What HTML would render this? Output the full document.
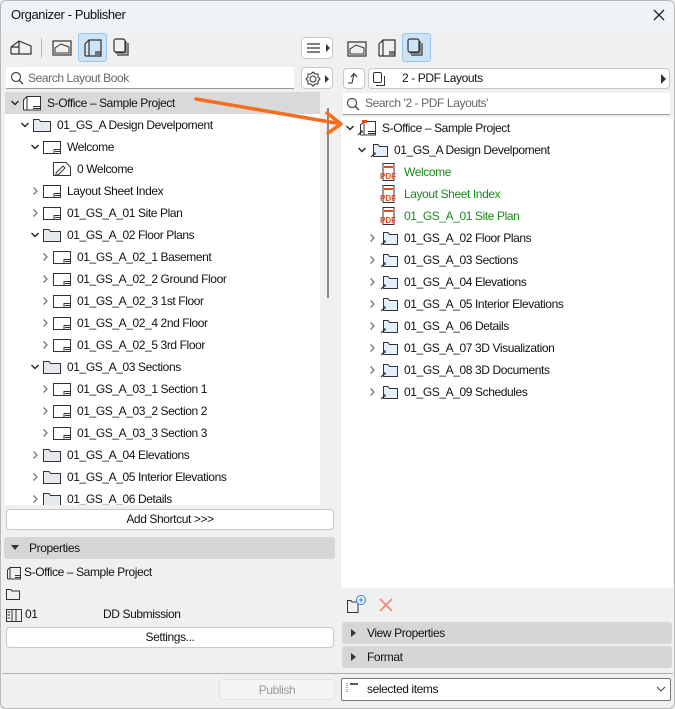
<!DOCTYPE html>
<html><head><meta charset="utf-8">
<style>
*{box-sizing:border-box;margin:0;padding:0}
body{width:675px;height:709px;background:#f0f0f0;font-family:"Segoe UI","Liberation Sans",sans-serif;font-size:12px;color:#111;position:relative;overflow:hidden;letter-spacing:-0.4px}
.a{position:absolute}
.win{left:0;top:0;width:675px;height:709px;border:1px solid #b8b8b8;border-radius:6px;background:#f0f0f0}
.title{left:1px;top:1px;width:673px;height:29px;background:#eef3f8;border-radius:6px 6px 0 0}
.r{position:absolute;height:22px;line-height:22px;display:flex;align-items:center;white-space:nowrap;font-size:12px}
.c{width:14px;height:22px;display:flex;align-items:center;justify-content:center}
.i{width:20px;height:22px;display:flex;align-items:center;margin-right:5px}
.btn{position:absolute;background:#fff;border:1px solid #c8c8c8;border-radius:4px;text-align:center;font-size:12px}
.hdr{position:absolute;background:#d6d6d6;border-radius:3px;font-size:12px;line-height:20px}
.g{color:#1a8a1a}
</style></head><body>
<div class="a win"></div>
<div class="a title"></div>
<div class="a" style="left:11px;top:7px;font-size:13px">Organizer - Publisher</div>
<svg class="a" style="left:652px;top:8px" width="14" height="14"><path d="M2 2L12 12M12 2L2 12" stroke="#222" stroke-width="1.3"/></svg>

<svg class="a" style="left:9px;top:38px" width="24" height="20"><path d="M2 16V9L10 3L22 8V16H2M10 3V16M2 9L10 9" fill="none" stroke="#333" stroke-width="1.2"/></svg>
<div class="a" style="left:41px;top:38px;width:1px;height:20px;background:#bbb"></div>
<svg class="a" style="left:51px;top:38px" width="22" height="20"><rect x="2" y="3" width="18" height="14" fill="none" stroke="#333" stroke-width="1.2"/><path d="M4 15V10L10 6L18 9V15Z" fill="none" stroke="#333"/></svg>
<div class="a" style="left:78px;top:33px;width:29px;height:29px;background:#cde4f7;border:1px solid #9cc6ea;border-radius:3px"></div>
<svg class="a" style="left:82px;top:37px" width="22" height="22"><path d="M3 19V7L7 3H19V19H3M7 3V19M13 15H19M13 17H19" fill="none" stroke="#333" stroke-width="1.2"/></svg>
<svg class="a" style="left:112px;top:37px" width="20" height="22"><rect x="2" y="2" width="11" height="13" rx="2" fill="none" stroke="#333" stroke-width="1.2"/><path d="M5 18H16V6" fill="none" stroke="#333" stroke-width="1.2"/><path d="M4 15V16H14V4" fill="none" stroke="#333"/></svg>
<div class="btn" style="left:301px;top:37px;width:32px;height:22px"></div>
<svg class="a" style="left:306px;top:42px" width="26" height="12"><path d="M1 2H14M1 6H14M1 10H14" stroke="#333" stroke-width="1.2"/><path d="M20 2L24 6L20 10Z" fill="#333"/></svg>

<div class="a" style="left:6px;top:67px;width:288px;height:22px;background:#fff;border-bottom:1px solid #999"></div>
<svg class="a" style="left:10px;top:71px" width="14" height="14"><circle cx="6" cy="6" r="4.5" fill="none" stroke="#444" stroke-width="1.2"/><path d="M9.5 9.5L13 13" stroke="#444" stroke-width="1.3"/></svg>
<div class="a" style="left:28px;top:71px;color:#666">Search Layout Book</div>
<div class="btn" style="left:301px;top:67px;width:32px;height:22px"></div>
<svg class="a" style="left:304px;top:70px" width="28" height="18"><circle cx="9" cy="9" r="3" fill="none" stroke="#333"/><path d="M9 2L11 4L14 4L14 7L16 9L14 11L14 14L11 14L9 16L7 14L4 14L4 11L2 9L4 7L4 4L7 4Z" fill="none" stroke="#333"/><path d="M21 5L25 9L21 13Z" fill="#333"/></svg>

<div class="a" style="left:5px;top:92px;width:315px;height:413px;background:#fff"></div>
<div class="a" style="left:5px;top:92px;width:315px;height:22px;background:#d9d9d9"></div>
<div class="a" style="left:320px;top:92px;width:16px;height:413px;background:#f0f0f0"></div>
<div class="a" style="left:327px;top:108px;width:2px;height:190px;background:#888"></div>

<svg width="0" height="0" style="position:absolute"><defs>
<symbol id="cd" viewBox="0 0 10 10"><path d="M1.5 3L5 6.5L8.5 3" fill="none" stroke="#222" stroke-width="1.4"/></symbol>
<symbol id="cr" viewBox="0 0 10 10"><path d="M3.5 1.5L7 5L3.5 8.5" fill="none" stroke="#777" stroke-width="1.3"/></symbol>
<symbol id="fo" viewBox="0 0 20 16"><path d="M1.5 2.5H7L8.5 4.5H18.5V14.5H1.5Z" fill="#e6e9ef" stroke="#333"/></symbol>
<symbol id="sh" viewBox="0 0 20 16"><rect x="1.5" y="2.5" width="17" height="12" fill="#fff" stroke="#333"/><path d="M12 14.5V10.5H18.5M13 12.5H18" fill="none" stroke="#333"/></symbol>
<symbol id="bk" viewBox="0 0 20 16"><path d="M1.5 15V5L5 1.5H18.5V15H1.5M5 1.5V15M11 11.5H18M11 13.5H18" fill="#fff" stroke="#333"/></symbol>
<symbol id="dr" viewBox="0 0 20 16"><path d="M1.5 1.5H14L18.5 6V14.5H1.5Z" fill="#fff" stroke="#333"/><path d="M4 12L11 5L13 7L6 14H4Z" fill="none" stroke="#333"/></symbol>
<symbol id="pd" viewBox="0 0 20 20"><path d="M4 1.5H15V18.5H4Z" fill="#fff" stroke="#333"/><rect x="5" y="4" width="9" height="2" fill="#e84a1c"/><text x="1" y="17" font-size="8" font-family="Liberation Sans" fill="#e84a1c" font-weight="bold" letter-spacing="0">PDF</text></symbol>
<symbol id="rf" viewBox="0 0 20 16"><path d="M4.5 2.5H9L10.5 4.5H18.5V14.5H4.5Z" fill="#e3f0fb" stroke="#333"/><path d="M2 15L5 12M4 11H6V13" stroke="#333" fill="none" stroke-width="1.2"/></symbol>
<symbol id="rb" viewBox="0 0 20 16"><path d="M3.5 15V5L7 1.5H18.5V15H3.5M7 1.5V15" fill="#fff" stroke="#333"/><path d="M11 11.5H18M11 13.5H18" stroke="#333"/><rect x="5" y="0" width="5" height="3" fill="#e84a1c"/><path d="M1 15L4 12M3 11H5V13" stroke="#333" fill="none" stroke-width="1.2"/></symbol>
</defs></svg>

<div class="r" style="top:92px;left:8px"><span class="c"><svg width="10" height="10"><use href="#cd"/></svg></span><span class="i"><svg width="20" height="16"><use href="#bk"/></svg></span>S-Office – Sample Project</div>
<div class="r" style="top:114px;left:18px"><span class="c"><svg width="10" height="10"><use href="#cd"/></svg></span><span class="i"><svg width="20" height="16"><use href="#fo"/></svg></span>01_GS_A Design Develpoment</div>
<div class="r" style="top:136px;left:28px"><span class="c"><svg width="10" height="10"><use href="#cd"/></svg></span><span class="i"><svg width="20" height="16"><use href="#sh"/></svg></span>Welcome</div>
<div class="r" style="top:158px;left:38px"><span class="c"></span><span class="i"><svg width="20" height="16"><use href="#dr"/></svg></span>0 Welcome</div>
<div class="r" style="top:180px;left:28px"><span class="c"><svg width="10" height="10"><use href="#cr"/></svg></span><span class="i"><svg width="20" height="16"><use href="#sh"/></svg></span>Layout Sheet Index</div>
<div class="r" style="top:202px;left:28px"><span class="c"><svg width="10" height="10"><use href="#cr"/></svg></span><span class="i"><svg width="20" height="16"><use href="#sh"/></svg></span>01_GS_A_01 Site Plan</div>
<div class="r" style="top:224px;left:28px"><span class="c"><svg width="10" height="10"><use href="#cd"/></svg></span><span class="i"><svg width="20" height="16"><use href="#fo"/></svg></span>01_GS_A_02 Floor Plans</div>
<div class="r" style="top:246px;left:38px"><span class="c"><svg width="10" height="10"><use href="#cr"/></svg></span><span class="i"><svg width="20" height="16"><use href="#sh"/></svg></span>01_GS_A_02_1 Basement</div>
<div class="r" style="top:268px;left:38px"><span class="c"><svg width="10" height="10"><use href="#cr"/></svg></span><span class="i"><svg width="20" height="16"><use href="#sh"/></svg></span>01_GS_A_02_2 Ground Floor</div>
<div class="r" style="top:290px;left:38px"><span class="c"><svg width="10" height="10"><use href="#cr"/></svg></span><span class="i"><svg width="20" height="16"><use href="#sh"/></svg></span>01_GS_A_02_3 1st Floor</div>
<div class="r" style="top:312px;left:38px"><span class="c"><svg width="10" height="10"><use href="#cr"/></svg></span><span class="i"><svg width="20" height="16"><use href="#sh"/></svg></span>01_GS_A_02_4 2nd Floor</div>
<div class="r" style="top:334px;left:38px"><span class="c"><svg width="10" height="10"><use href="#cr"/></svg></span><span class="i"><svg width="20" height="16"><use href="#sh"/></svg></span>01_GS_A_02_5 3rd Floor</div>
<div class="r" style="top:356px;left:28px"><span class="c"><svg width="10" height="10"><use href="#cd"/></svg></span><span class="i"><svg width="20" height="16"><use href="#fo"/></svg></span>01_GS_A_03 Sections</div>
<div class="r" style="top:378px;left:38px"><span class="c"><svg width="10" height="10"><use href="#cr"/></svg></span><span class="i"><svg width="20" height="16"><use href="#sh"/></svg></span>01_GS_A_03_1 Section 1</div>
<div class="r" style="top:400px;left:38px"><span class="c"><svg width="10" height="10"><use href="#cr"/></svg></span><span class="i"><svg width="20" height="16"><use href="#sh"/></svg></span>01_GS_A_03_2 Section 2</div>
<div class="r" style="top:422px;left:38px"><span class="c"><svg width="10" height="10"><use href="#cr"/></svg></span><span class="i"><svg width="20" height="16"><use href="#sh"/></svg></span>01_GS_A_03_3 Section 3</div>
<div class="r" style="top:444px;left:28px"><span class="c"><svg width="10" height="10"><use href="#cr"/></svg></span><span class="i"><svg width="20" height="16"><use href="#fo"/></svg></span>01_GS_A_04 Elevations</div>
<div class="r" style="top:466px;left:28px"><span class="c"><svg width="10" height="10"><use href="#cr"/></svg></span><span class="i"><svg width="20" height="16"><use href="#fo"/></svg></span>01_GS_A_05 Interior Elevations</div>
<div class="a" style="left:5px;top:488px;width:315px;height:17px;overflow:hidden"><div class="r" style="top:0;left:23px"><span class="c"><svg width="10" height="10"><use href="#cr"/></svg></span><span class="i"><svg width="20" height="16"><use href="#fo"/></svg></span>01_GS_A_06 Details</div></div>

<div class="btn" style="left:6px;top:509px;width:328px;height:21px;line-height:19px">Add Shortcut &gt;&gt;&gt;</div>
<div class="hdr" style="left:4px;top:537px;width:331px;height:22px;line-height:22px"><svg class="a" style="left:7px;top:8px" width="8" height="6"><path d="M0 0H8L4 5Z" fill="#333"/></svg><span style="position:absolute;left:25px">Properties</span></div>
<svg class="a" style="left:6px;top:566px" width="16" height="14"><path d="M1.5 13V4L4 1.5H14.5V13H1.5M4 1.5V13M9 9.5H14M9 11.5H14" fill="none" stroke="#333"/></svg>
<div class="a" style="left:24px;top:565px">S-Office – Sample Project</div>
<svg class="a" style="left:6px;top:588px" width="14" height="12"><path d="M0.5 1.5H5L6 3H13.5V11.5H0.5Z" fill="none" stroke="#333"/></svg>
<svg class="a" style="left:6px;top:609px" width="16" height="13"><path d="M0.5 0.5H15.5V12.5H0.5ZM6 0.5V12.5M10 0.5V12.5M1.5 3H4M1.5 6H4M1.5 9H4" fill="none" stroke="#333"/></svg>
<div class="a" style="left:25px;top:607px">01</div>
<div class="a" style="left:103px;top:607px">DD Submission</div>
<div class="btn" style="left:6px;top:627px;width:328px;height:21px;line-height:19px">Settings...</div>

<svg class="a" style="left:346px;top:39px" width="22" height="20"><rect x="2" y="3" width="18" height="14" fill="none" stroke="#333" stroke-width="1.2"/><path d="M4 15V10L10 6L18 9V15Z" fill="none" stroke="#333"/></svg>
<svg class="a" style="left:376px;top:37px" width="22" height="22"><path d="M3 19V7L7 3H19V19H3M7 3V19M13 15H19M13 17H19" fill="none" stroke="#333" stroke-width="1.2"/></svg>
<div class="a" style="left:402px;top:33px;width:29px;height:29px;background:#cde4f7;border:1px solid #9cc6ea;border-radius:3px"></div>
<svg class="a" style="left:406px;top:37px" width="20" height="22"><rect x="2" y="2" width="11" height="13" rx="2" fill="none" stroke="#333" stroke-width="1.2"/><path d="M5 18H16V6" fill="none" stroke="#333" stroke-width="1.2"/><path d="M4 15V16H14V4" fill="none" stroke="#333"/></svg>

<div class="btn" style="left:343px;top:68px;width:22px;height:21px"></div>
<svg class="a" style="left:347px;top:71px" width="14" height="14"><path d="M1 12H5L7 3M4 6L7 2.5L10 6" fill="none" stroke="#333" stroke-width="1.1"/></svg>
<div class="btn" style="left:368px;top:68px;width:302px;height:21px"></div>
<svg class="a" style="left:372px;top:71px" width="16" height="16"><rect x="1.5" y="1.5" width="8" height="10" rx="1.5" fill="none" stroke="#333"/><path d="M4 14.5H12.5V5" fill="none" stroke="#333"/></svg>
<div class="a" style="left:402px;top:71px">2 - PDF Layouts</div>
<svg class="a" style="left:661px;top:74px" width="6" height="10"><path d="M0 0L5 5L0 10Z" fill="#333"/></svg>
<div class="a" style="left:343px;top:93px;width:327px;height:22px;background:#fff;border-bottom:1px solid #999"></div>
<svg class="a" style="left:346px;top:97px" width="14" height="14"><circle cx="6" cy="6" r="4.5" fill="none" stroke="#444" stroke-width="1.2"/><path d="M9.5 9.5L13 13" stroke="#444" stroke-width="1.3"/></svg>
<div class="a" style="left:365px;top:96px;color:#666">Search '2 - PDF Layouts'</div>

<div class="a" style="left:341px;top:117px;width:332px;height:471px;background:#fff"></div>
<div class="r" style="top:117px;left:343px"><span class="c"><svg width="10" height="10"><use href="#cd"/></svg></span><span class="i"><svg width="20" height="16"><use href="#rb"/></svg></span>S-Office – Sample Project</div>
<div class="r" style="top:139px;left:355px"><span class="c"><svg width="10" height="10"><use href="#cd"/></svg></span><span class="i"><svg width="20" height="16"><use href="#rf"/></svg></span>01_GS_A Design Develpoment</div>
<div class="r g" style="top:161px;left:365px"><span class="c"></span><span class="i"><svg width="20" height="20"><use href="#pd"/></svg></span>Welcome</div>
<div class="r g" style="top:183px;left:365px"><span class="c"></span><span class="i"><svg width="20" height="20"><use href="#pd"/></svg></span>Layout Sheet Index</div>
<div class="r g" style="top:205px;left:365px"><span class="c"></span><span class="i"><svg width="20" height="20"><use href="#pd"/></svg></span>01_GS_A_01 Site Plan</div>
<div class="r" style="top:227px;left:365px"><span class="c"><svg width="10" height="10"><use href="#cr"/></svg></span><span class="i"><svg width="20" height="16"><use href="#rf"/></svg></span>01_GS_A_02 Floor Plans</div>
<div class="r" style="top:249px;left:365px"><span class="c"><svg width="10" height="10"><use href="#cr"/></svg></span><span class="i"><svg width="20" height="16"><use href="#rf"/></svg></span>01_GS_A_03 Sections</div>
<div class="r" style="top:271px;left:365px"><span class="c"><svg width="10" height="10"><use href="#cr"/></svg></span><span class="i"><svg width="20" height="16"><use href="#rf"/></svg></span>01_GS_A_04 Elevations</div>
<div class="r" style="top:293px;left:365px"><span class="c"><svg width="10" height="10"><use href="#cr"/></svg></span><span class="i"><svg width="20" height="16"><use href="#rf"/></svg></span>01_GS_A_05 Interior Elevations</div>
<div class="r" style="top:315px;left:365px"><span class="c"><svg width="10" height="10"><use href="#cr"/></svg></span><span class="i"><svg width="20" height="16"><use href="#rf"/></svg></span>01_GS_A_06 Details</div>
<div class="r" style="top:337px;left:365px"><span class="c"><svg width="10" height="10"><use href="#cr"/></svg></span><span class="i"><svg width="20" height="16"><use href="#rf"/></svg></span>01_GS_A_07 3D Visualization</div>
<div class="r" style="top:359px;left:365px"><span class="c"><svg width="10" height="10"><use href="#cr"/></svg></span><span class="i"><svg width="20" height="16"><use href="#rf"/></svg></span>01_GS_A_08 3D Documents</div>
<div class="r" style="top:381px;left:365px"><span class="c"><svg width="10" height="10"><use href="#cr"/></svg></span><span class="i"><svg width="20" height="16"><use href="#rf"/></svg></span>01_GS_A_09 Schedules</div>

<svg class="a" style="left:346px;top:594px" width="24" height="20"><path d="M1.5 6.5H5L6 8H12V18.5H1.5Z" fill="none" stroke="#333"/><circle cx="15" cy="6" r="4.5" fill="#fff" stroke="#2b7de0"/><path d="M15 3.5V8.5M12.5 6H17.5" stroke="#2b7de0"/></svg>
<svg class="a" style="left:378px;top:597px" width="16" height="16"><path d="M2 2L14 14M14 2L2 14" stroke="#f08a7a" stroke-width="1.8"/></svg>
<div class="hdr" style="left:342px;top:622px;width:330px;height:22px;line-height:22px"><svg class="a" style="left:9px;top:7px" width="6" height="8"><path d="M0 0L5 4L0 8Z" fill="#333"/></svg><span style="position:absolute;left:25px">View Properties</span></div>
<div class="hdr" style="left:342px;top:646px;width:330px;height:22px;line-height:22px"><svg class="a" style="left:9px;top:7px" width="6" height="8"><path d="M0 0L5 4L0 8Z" fill="#333"/></svg><span style="position:absolute;left:25px">Format</span></div>

<div class="a" style="left:2px;top:673px;width:671px;height:1px;background:#b0b0b0"></div>
<div class="a" style="left:219px;top:679px;width:116px;height:21px;background:#f4f4f4;border:1px solid #e2e2e2;border-radius:4px;text-align:center;line-height:20px;color:#999">Publish</div>
<div class="a" style="left:341px;top:678px;width:330px;height:23px;background:#fff;border:1px solid #777;border-radius:2px"></div>
<svg class="a" style="left:346px;top:682px" width="14" height="12"><path d="M1 1V11" stroke="#555" stroke-dasharray="1 1"/><path d="M4 2H12" stroke="#222" stroke-width="1.5"/></svg>
<div class="a" style="left:367px;top:682px">selected items</div>
<svg class="a" style="left:656px;top:686px" width="10" height="6"><path d="M1 1L5 5L9 1" fill="none" stroke="#444"/></svg>

<svg class="a" style="left:0;top:0" width="675" height="709" pointer-events="none"><path d="M196 99L336 123" stroke="#f36f1e" stroke-width="3.5" stroke-linecap="round"/><path d="M327 113L341 124L328 133" fill="none" stroke="#f36f1e" stroke-width="3.5" stroke-linecap="round" stroke-linejoin="round"/></svg>
</body></html>
